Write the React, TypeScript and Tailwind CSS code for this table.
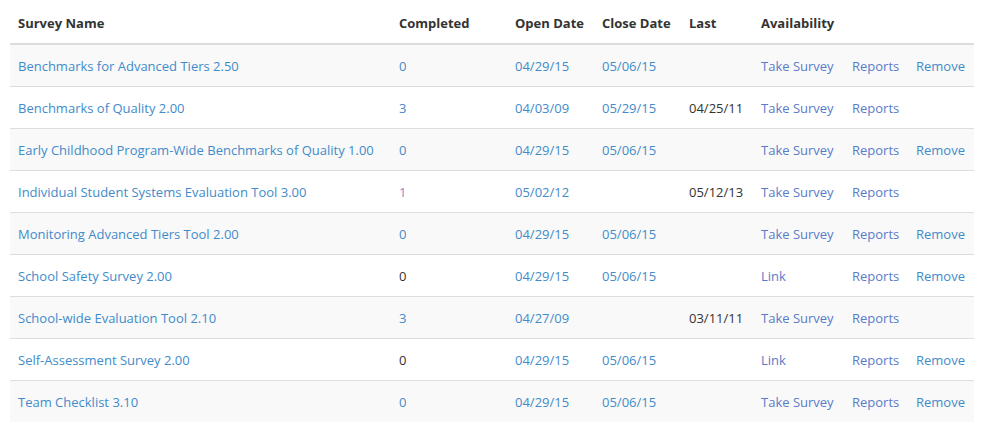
import React from 'react';

interface Survey {
  name: string;
  completed: string;
  completedLink: boolean;
  completedVisited?: boolean;
  open: string;
  close: string;
  last: string;
  availability: string;
  removable: boolean;
}

const surveys: Survey[] = [
  { name: 'Benchmarks for Advanced Tiers 2.50', completed: '0', completedLink: true, open: '04/29/15', close: '05/06/15', last: '', availability: 'Take Survey', removable: true },
  { name: 'Benchmarks of Quality 2.00', completed: '3', completedLink: true, open: '04/03/09', close: '05/29/15', last: '04/25/11', availability: 'Take Survey', removable: false },
  { name: 'Early Childhood Program-Wide Benchmarks of Quality 1.00', completed: '0', completedLink: true, open: '04/29/15', close: '05/06/15', last: '', availability: 'Take Survey', removable: true },
  { name: 'Individual Student Systems Evaluation Tool 3.00', completed: '1', completedLink: true, completedVisited: true, open: '05/02/12', close: '', last: '05/12/13', availability: 'Take Survey', removable: false },
  { name: 'Monitoring Advanced Tiers Tool 2.00', completed: '0', completedLink: true, open: '04/29/15', close: '05/06/15', last: '', availability: 'Take Survey', removable: true },
  { name: 'School Safety Survey 2.00', completed: '0', completedLink: false, open: '04/29/15', close: '05/06/15', last: '', availability: 'Link', removable: true },
  { name: 'School-wide Evaluation Tool 2.10', completed: '3', completedLink: true, open: '04/27/09', close: '', last: '03/11/11', availability: 'Take Survey', removable: false },
  { name: 'Self-Assessment Survey 2.00', completed: '0', completedLink: false, open: '04/29/15', close: '05/06/15', last: '', availability: 'Link', removable: true },
  { name: 'Team Checklist 3.10', completed: '0', completedLink: true, open: '04/29/15', close: '05/06/15', last: '', availability: 'Take Survey', removable: true },
];

const link = 'text-[#428bca]';
const visited = 'text-[#5a7bc8]';

export default function App() {
  return (
    <div className="h-[433px] w-[985px] bg-white px-[10px] text-[13px] leading-5 text-[#333]" style={{ fontFamily: '"Open Sans", "Noto Sans", sans-serif' }}>
      <table className="w-[964px] table-fixed border-collapse">
        <colgroup>
          <col className="w-[381px]" />
          <col className="w-[116px]" />
          <col className="w-[87px]" />
          <col className="w-[87px]" />
          <col className="w-[72px]" />
          <col className="w-[91px]" />
          <col className="w-[64px]" />
          <col className="w-[66px]" />
        </colgroup>
        <thead>
          <tr className="h-[44px] border-b-2 border-[#ddd]">
            <th className="whitespace-nowrap px-2 pt-[2px] text-left font-bold">Survey Name</th>
            <th className="whitespace-nowrap px-2 pt-[2px] text-left font-bold">Completed</th>
            <th className="whitespace-nowrap px-2 pt-[2px] text-left font-bold">Open Date</th>
            <th className="whitespace-nowrap px-2 pt-[2px] text-left font-bold">Close Date</th>
            <th className="whitespace-nowrap px-2 pt-[2px] text-left font-bold">Last</th>
            <th className="whitespace-nowrap px-2 pt-[2px] text-left font-bold">Availability</th>
            <th />
            <th />
          </tr>
        </thead>
        <tbody>
          {surveys.map((s, i) => (
            <tr key={s.name} className={`h-[42px] border-t border-[#ddd] first:border-t-0 ${i % 2 === 0 ? 'bg-[#f9f9f9]' : 'bg-white'}`}>
              <td className={`whitespace-nowrap px-2 pt-[2px] ${link}`}>{s.name}</td>
              <td className={`px-2 pt-[2px] ${s.completedVisited ? 'text-[#9b86c9]' : s.completedLink ? link : ''}`}>{s.completed}</td>
              <td className={`px-2 pt-[2px] ${link}`}>{s.open}</td>
              <td className={`px-2 pt-[2px] ${link}`}>{s.close}</td>
              <td className="px-2 pt-[2px]">{s.last}</td>
              <td className={`whitespace-nowrap px-2 pt-[2px] ${visited}`}>{s.availability}</td>
              <td className={`px-2 pt-[2px] ${visited}`}>Reports</td>
              <td className={`px-2 pt-[2px] ${link}`}>{s.removable ? 'Remove' : ''}</td>
            </tr>
          ))}
        </tbody>
      </table>
    </div>
  );
}
